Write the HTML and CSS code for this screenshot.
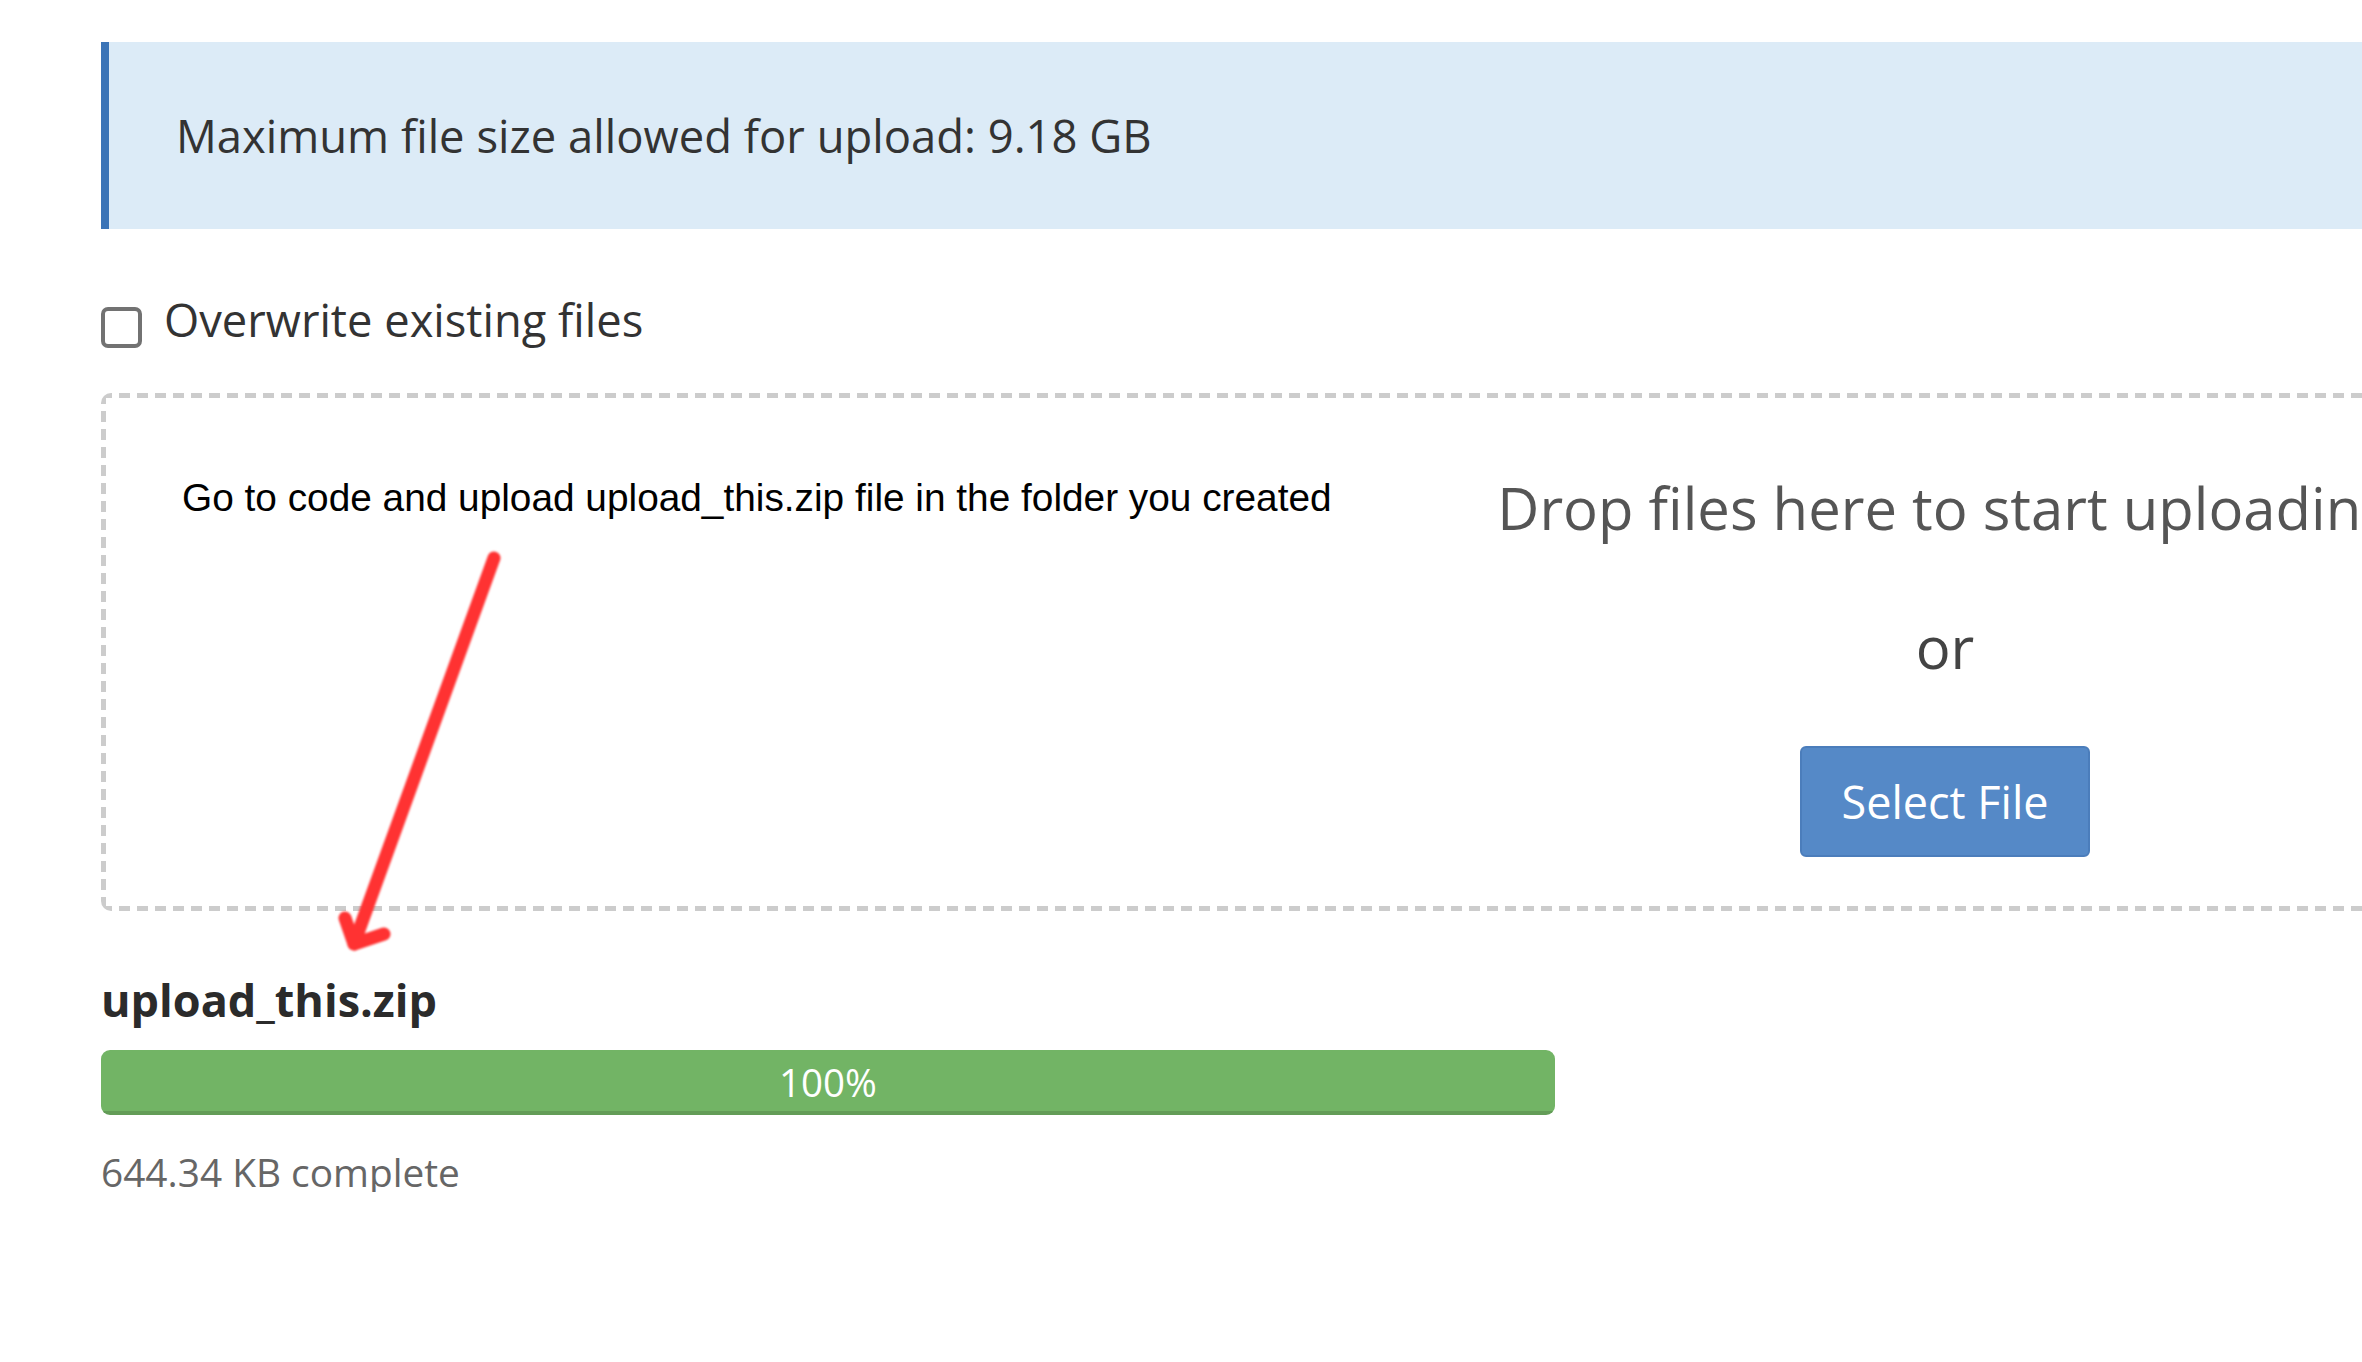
FILE: index.html
```html
<!DOCTYPE html>
<html lang="en">
<head>
<meta charset="utf-8">
<title>Upload</title>
<link rel="stylesheet" href="styles.css">
</head>
<body>
<div class="page">
  <div class="notice">Maximum file size allowed for upload: 9.18 GB</div>
  <label class="overwrite">
    <span class="checkbox"></span>
    <span class="overwrite-label">Overwrite existing files</span>
  </label>
  <div class="dropzone">
    <div class="note">Go to code and upload upload_this.zip file in the folder you created</div>
    <div class="drop-cta">
      <div class="drop-title">Drop files here to start uploading</div>
      <div class="drop-or">or</div>
      <button class="select-btn" type="button">Select File</button>
    </div>
  </div>
  <div class="file">
    <div class="file-name">upload_this.zip</div>
    <div class="progress"><div class="progress-bar" style="width:100%">100%</div></div>
    <div class="file-status">644.34 KB complete</div>
  </div>
  <svg class="arrow" width="600" height="1000" viewBox="0 0 600 1000" aria-hidden="true">
    <g class="arrow-stroke" fill="none" stroke="#ff3232" stroke-width="13" stroke-linecap="round" stroke-linejoin="round">
      <path d="M494 558 L354 944"/>
      <path d="M345 918 L354 944 L384 934"/>
    </g>
  </svg>
</div>
</body>
</html>
```

FILE: styles.css
```css
html, body {
  margin: 0;
  padding: 0;
  overflow: hidden;
  background: #ffffff;
}

.page {
  position: relative;
  width: 2500px;
  padding: 42px 0 0 101px;
  font-family: "Open Sans", "Noto Sans", sans-serif;
  color: #333333;
}

.notice {
  box-sizing: border-box;
  height: 187px;
  display: flex;
  align-items: center;
  padding-left: 67px;
  background: #dcebf7;
  border-left: 8px solid #3b74b7;
  font-size: 45.4px;
  line-height: 1;
  color: #333333;
}

.overwrite {
  display: flex;
  align-items: flex-start;
  gap: 22px;
  margin-top: 68px;
}

.checkbox {
  box-sizing: border-box;
  width: 41px;
  height: 41px;
  margin-top: 10px;
  border: 4px solid #727272;
  border-radius: 7px;
  background: #ffffff;
}

.overwrite-label {
  font-size: 45.3px;
  line-height: 45px;
  color: #333333;
}

.dropzone {
  box-sizing: border-box;
  height: 518px;
  margin-top: 45px;
  padding: 5px;
  border-radius: 10px;
  display: grid;
  grid-template-columns: 1339px 1000px;
  background:
    repeating-linear-gradient(90deg, #cccccc 0 11px, transparent 11px 18px) left top / 100% 5px no-repeat,
    repeating-linear-gradient(90deg, #cccccc 0 11px, transparent 11px 18px) left bottom / 100% 5px no-repeat,
    repeating-linear-gradient(180deg, #cccccc 0 11px, transparent 11px 18px) left top / 5px 100% no-repeat,
    repeating-linear-gradient(180deg, #cccccc 0 11px, transparent 11px 18px) right top / 5px 100% no-repeat;
}

.note {
  padding: 81px 0 0 76px;
  font-family: "Liberation Sans", Arial, sans-serif;
  font-size: 38.8px;
  line-height: 1;
  color: #000000;
  white-space: nowrap;
}

.drop-cta {
  display: flex;
  flex-direction: column;
  align-items: center;
  padding-top: 81px;
  text-align: center;
}

.drop-title {
  font-size: 58px;
  line-height: 1;
  color: #555555;
  white-space: nowrap;
}

.drop-or {
  margin-top: 81px;
  font-size: 58px;
  line-height: 1;
  color: #444444;
}

.select-btn {
  box-sizing: border-box;
  width: 290px;
  height: 111px;
  margin-top: 70px;
  display: flex;
  align-items: center;
  justify-content: center;
  padding: 0;
  background: #5589c7;
  border: 2px solid #4b7dbb;
  border-radius: 6px;
  color: #ffffff;
  font-family: "Open Sans", "Noto Sans", sans-serif;
  font-size: 45px;
  line-height: 1;
}

.file {
  margin-top: 66px;
}

.file-name {
  font-size: 45px;
  font-weight: 700;
  line-height: 1;
  color: #2b2b2b;
}

.progress {
  width: 1454px;
  height: 65px;
  margin-top: 28px;
  border-radius: 9px;
  overflow: hidden;
  background: #eeeeee;
}

.progress-bar {
  height: 100%;
  display: flex;
  align-items: center;
  justify-content: center;
  background: #72b465;
  box-shadow: inset 0 -4px 0 rgba(0, 0, 0, 0.13);
  color: #ffffff;
  font-size: 38.5px;
  line-height: 1;
}

.file-status {
  margin-top: 38px;
  font-size: 38.8px;
  line-height: 1;
  color: #666666;
}

.arrow {
  position: absolute;
  left: 0;
  top: 0;
  overflow: visible;
  pointer-events: none;
}

.arrow-stroke {
  filter: blur(0.8px);
}
```
